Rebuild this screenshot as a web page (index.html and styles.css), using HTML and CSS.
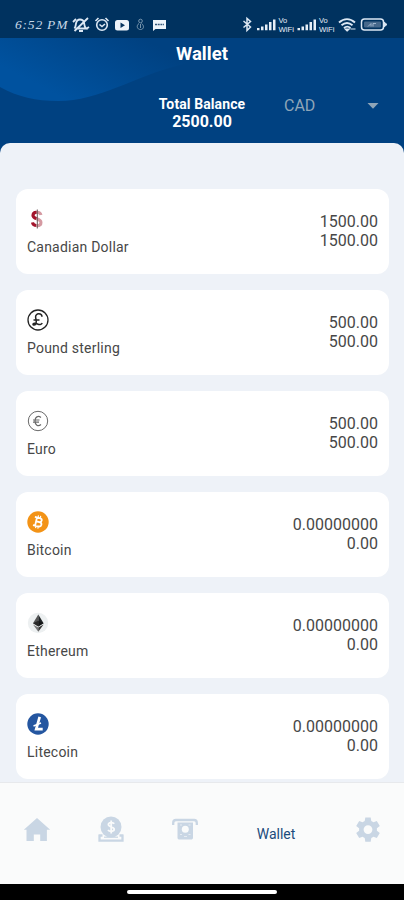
FILE: index.html
```html
<!DOCTYPE html>
<html lang="en">
<head>
<meta charset="utf-8">
<title>Wallet</title>
<link rel="stylesheet" href="styles.css">
</head>
<body>
<div class="app">
  <div class="status">
    <span class="time">6:52 PM</span>
    <svg class="status-left" width="96" height="20" viewBox="72 15 96 20" fill="none" stroke="#dce8f4" stroke-width="1.6">
      <path d="M76 28.5h10c-2-2-1.500-4-2-6s-2-3-4-3-3.500 1.500-4 4-.2 3-1.500 5M79 31h4M74.500 31 88 18M73 22l3-3M86 29l3-2" stroke-width="1.800"/>
      <circle cx="102" cy="25" r="5.300"/><path d="m95.500 21 3-3M108.500 21l-3-3M99.500 24.500l2.500 2 3-2.500"/>
      <rect x="115" y="20" width="14" height="10.500" rx="2.500" fill="#eef4fa" stroke="none"/><path d="m120.500 22.500 4.500 2.700-4.500 2.700z" fill="#07345f" stroke="none"/>
      <g stroke="#7896ae" stroke-width="1"><circle cx="140.500" cy="21" r="1.800"/><path d="M139 23.500c-3 2-2 6 1.500 6s4-4 1-6M140.500 24v4"/></g>
      <path d="M153 20h13v9h-10.500L153 31z" fill="#eef4fa" stroke="none"/><path d="M155 24.500h9" stroke="#36597b" stroke-dasharray="2 .7"/>
    </svg>
    <svg class="status-right" width="148" height="20" viewBox="241 15 148 20" fill="none" stroke="#dce8f4" stroke-width="1.500">
      <path d="m243.500 21 7 6-3.500 3.500v-12l3.500 3-7 6"/>
      <g id="cell" fill="#e6eef7" stroke="none"><path d="M257 28h2.500v2.200H257zM261 26.500h2.500v3.700H261zM265 24.500h2.500v5.700H265zM269 22h2.500v8.200H269zM273 19.500h2.500v10.700H273z"/><text class="vo" x="278.500" y="23">Vo</text><text class="vo" x="278.500" y="31.500" textLength="15.500" lengthAdjust="spacingAndGlyphs">WiFi</text></g>
      <use href="#cell" x="40.500"/>
      <path d="M339 22.500c5-4.500 11-4.500 16 0M341.500 25.300c3.500-3 7.500-3 11 0M344 28c2-1.700 4.500-1.700 6.500 0" stroke-width="1.900"/><path d="m347.200 31-2-2h4zM350.500 29h5" fill="#dce8f4" stroke-width="1.200"/>
      <rect x="361.500" y="19" width="22" height="11" rx="3"/><path d="M384 22l3 2.500-3 2.500" fill="#dce8f4" stroke-width="1"/><rect x="364" y="21.500" width="17" height="6" rx="1" fill="#46688b" stroke="none"/><path d="m368 26.500 3-3v3m2 0v-3h3" stroke-width=".8" stroke="#b4c7da"/>
    </svg>
  </div>
  <header class="header">
    <svg class="wave" width="200" height="64" viewBox="0 0 200 64">
      <defs><linearGradient id="glow" gradientUnits="userSpaceOnUse" x1="70" y1="64" x2="112" y2="-16"><stop offset="0" stop-color="#00529f"/><stop offset="1" stop-color="#00529f" stop-opacity="0"/></linearGradient></defs>
      <path d="M0 0v49c18 10 36 14 58 14 42 0 74-24 122-36l20-5V0z" fill="url(#glow)"/>
    </svg>
    <h1>Wallet</h1>
    <div class="summary">
      <div class="balance"><div class="balance-label">Total Balance</div><div class="balance-value">2500.00</div></div>
      <div class="currency"><span>CAD</span><svg width="12" height="6" viewBox="0 0 12 6"><path d="M.5 0h11L6 5.800z" fill="#8fa5b8"/></svg></div>
    </div>
  </header>
  <main class="list">
    <section class="card"><div class="coin">
      <svg width="22" height="22" viewBox="0 0 22 22" fill="none"><path d="M14 7c-.5-2-2-2.800-4-2.800-2.500 0-4 1.300-4 3.200C6 11.500 14 10 14 14.500c0 2-1.700 3.200-4 3.200-2.500 0-4-1.200-4.500-3.200" stroke="#d59aa2" stroke-width="3"/><path d="M9.500 4.200C7.300 4.200 6 5.500 6 7.400c0 1.800 1.600 2.500 3.300 3.200M9 17.600c-2-.3-3.100-1.300-3.500-3.100" stroke="#a3152c" stroke-width="3"/><path d="M10.300 1.500v19" stroke="#6a5557" stroke-width="1"/></svg>
      <span>Canadian Dollar</span></div><div class="amount"><span>1500.00</span><span>1500.00</span></div></section>
    <section class="card"><div class="coin">
      <svg width="22" height="22" viewBox="0 0 22 22" fill="none" stroke="#242424"><circle cx="11" cy="11" r="10" stroke-width="1.300"/><path d="M15 7.800C14.800 3.700 8.300 4 8.600 8c.2 2.500 1.500 5 .2 7-1 1.500-2.800 1.300-2.800.3 0-1.300 2.500-1.200 4.500-.3s4 .9 4.700-.9M6.500 11h6" stroke-width="1.500"/></svg>
      <span>Pound sterling</span></div><div class="amount"><span>500.00</span><span>500.00</span></div></section>
    <section class="card"><div class="coin">
      <svg width="22" height="22" viewBox="0 0 22 22" fill="none" stroke="#696969"><circle cx="11" cy="11" r="9.700" stroke-width="1"/><path d="M14 7.500c-3-2.300-6-.5-6 3.500s3 6 6 3.500M6 10h6.500M6 12.200h6" stroke-width="1.200"/></svg>
      <span>Euro</span></div><div class="amount"><span>500.00</span><span>500.00</span></div></section>
    <section class="card"><div class="coin">
      <svg width="22" height="22" viewBox="0 0 22 22" fill="none"><circle cx="11" cy="11" r="10.700" fill="#f39316"/><g transform="rotate(13 11 11)" stroke="#fff"><path d="M8.500 6.800h3.300c3.300 0 3.300 4 0 4H9h3.300c3.500 0 3.500 4.400 0 4.400H8.500M9 6.500v9M6.800 6.800H9M6.800 15.200H9" stroke-width="1.800"/><path d="M10 4.500v2M12.300 4.500v2M10 15.500v2M12.300 15.500v2" stroke-width="1.200"/></g></svg>
      <span>Bitcoin</span></div><div class="amount"><span>0.00000000</span><span>0.00</span></div></section>
    <section class="card"><div class="coin">
      <svg width="22" height="22" viewBox="0 0 22 22"><circle cx="11" cy="11" r="10.200" fill="#edf0f1"/><path d="M11.300 2.500 6 11.300l5.300 3.100z" fill="#555"/><path d="m11.300 2.500 5.300 8.800-5.300 3.100z" fill="#202426"/><path d="m11.300 8.800-5.300 2.500 5.300 3.100 5.300-3.100z" fill="#111" opacity=".65"/><path d="m6 12.500 5.300 3.100v4.200z" fill="#777"/><path d="m16.600 12.500-5.300 3.100v4.200z" fill="#353535"/></svg>
      <span>Ethereum</span></div><div class="amount"><span>0.00000000</span><span>0.00</span></div></section>
    <section class="card"><div class="coin">
      <svg width="22" height="22" viewBox="0 0 22 22" fill="none"><circle cx="11" cy="11" r="10.700" fill="#2456a0"/><path d="M12.700 3.800 9.200 16.200h6.500" stroke="#fff" stroke-width="2.700"/><path d="m6.500 13 7.500-3" stroke="#fff" stroke-width="1.500"/></svg>
      <span>Litecoin</span></div><div class="amount"><span>0.00000000</span><span>0.00</span></div></section>
  </main>
  <nav class="nav">
    <svg width="28" height="28" viewBox="0 0 28 28"><path d="M14 2 .8 13.800h2.700V25h7.300v-6.500h6.400V25h6.700V13.800h3.300z" fill="#c9d6e4"/></svg>
    <svg width="28" height="28" viewBox="0 0 28 28" fill="none" stroke="#c9d6e4"><circle cx="14" cy="11" r="10.500" fill="#c9d6e4" stroke="none"/><path d="M2.500 19v5.700h23V19M1.500 19.500h4M22.500 19.500h4" stroke-width="2.300"/><path d="M7 21.200h14" stroke-width="1.200"/><path d="M17.200 7.800c-1.200-1.900-5.800-1.500-5.800.8 0 2.700 5.800 1.700 5.800 4.700 0 2.400-4.700 2.800-6.200.7M14.200 4.500v13" stroke="#fafbfb" stroke-width="1.800"/></svg>
    <svg width="28" height="28" viewBox="0 0 28 28" fill="none" stroke="#c9d6e4"><path d="M2.200 9V7c0-2 .8-3 2.800-3h18c2 0 2.800 1 2.800 3v2" stroke-width="2.300"/><path fill="#c9d6e4" stroke="none" d="M6.500 6.500h15.500v15c0 1.500-.8 2-2 2H8.500c-1.200 0-2-.5-2-2z"/><circle cx="14.300" cy="13.200" r="3.500" fill="#fafbfb" stroke="none"/><path d="M9 9h2M17.500 9h2M9 18.500h2M17.500 18.500h2M13 20.500h3" stroke="#e6ecf2" stroke-width="1"/></svg>
    <span class="nav-active">Wallet</span>
    <svg width="28" height="28" viewBox="0 0 28 28"><path fill="#c9d6e4" fill-rule="evenodd" d="m11.300 1.500-.6 3.400-2.200 1.300-3.300-1.300-3 5.100 2.900 2.300v2.400l-2.900 2.300 3 5.100 3.300-1.300 2.200 1.300.6 3.700h5.400l.6-3.700 2.200-1.300 3.300 1.300 3-5.100-2.900-2.300v-2.400l2.900-2.300-3-5.100-3.300 1.300-2.200-1.300-.6-3.400zM14 9.200a4.400 4.400 0 1 1 0 8.800 4.400 4.400 0 0 1 0-8.800"/></svg>
  </nav>
  <div class="gesture"><div class="handle"></div></div>
</div>
</body>
</html>
```
FILE: styles.css
```css
* { box-sizing: border-box; }
body { margin: 0; font-family: Roboto, sans-serif; }
.app {
  width: 404px;
  height: 900px;
  overflow: hidden;
  display: flex;
  flex-direction: column;
  background: #004181;
}
.status {
  flex: 0 0 38px;
  display: flex;
  align-items: flex-start;
  padding: 15px 15px 0;
  background: #00325f;
}
.time {
  width: 57px;
  color: #c6d7e7;
  font: italic 13.5px/19px "Liberation Serif", serif;
  letter-spacing: .8px;
  white-space: nowrap;
}
.status-right { margin-left: auto; }
.vo { font: 400 7.5px "Liberation Sans", sans-serif; }
.header { position: relative; flex: 0 0 105px; color: #fff; }
.wave { position: absolute; top: 0; left: 0; }
h1 {
  position: relative;
  margin: 0;
  padding-top: 4px;
  font-size: 18.5px;
  line-height: 24px;
  font-weight: 700;
  text-align: center;
}
.summary {
  position: relative;
  display: grid;
  grid-template-columns: 1fr 120px 1fr;
  padding-top: 30px;
}
.balance {
  grid-column: 2;
  text-align: center;
  font-weight: 700;
  line-height: 17px;
  white-space: nowrap;
}
.balance-label { font-size: 14px; letter-spacing: .1px; }
.balance-value { font-size: 16px; line-height: 17px; }
.currency {
  display: flex;
  justify-content: space-between;
  align-items: center;
  height: 19px;
  padding: 0 25px 0 22px;
  color: #8fa5b8;
  font-size: 16px;
}
.list {
  flex: 1;
  min-height: 0;
  overflow: hidden;
  display: flex;
  flex-direction: column;
  gap: 16px;
  padding: 46px 15px 0 16px;
  border-radius: 10px 10px 0 0;
  background: #eef2f8;
}
.card {
  flex: 0 0 85px;
  display: flex;
  justify-content: space-between;
  padding: 19px 11px 0;
  border-radius: 12px;
  background: #fff;
  color: #474747;
}
.coin { display: flex; flex-direction: column; font-size: 14px; line-height: 18px; letter-spacing: .22px; }
.coin svg { margin-bottom: 7.5px; }
.amount {
  display: flex;
  flex-direction: column;
  padding-top: 5px;
  text-align: right;
  font-size: 16px;
  line-height: 18.5px;
}
.nav {
  flex: 0 0 102px;
  display: grid;
  grid-template-columns: 74px 74px 73px 110px 74px;
  justify-items: center;
  align-items: start;
  padding-top: 33px;
  border-top: 1px solid #e7e9ec;
  background: #fafbfb;
}
.nav-active {
  margin-top: 9px;
  color: #1b4b7c;
  font-size: 14px;
  line-height: 18px;
}
.gesture {
  flex: 0 0 16px;
  display: flex;
  justify-content: center;
  padding-top: 6px;
  background: #000;
}
.handle { width: 150px; height: 4px; border-radius: 2px; background: #fff; }
```
